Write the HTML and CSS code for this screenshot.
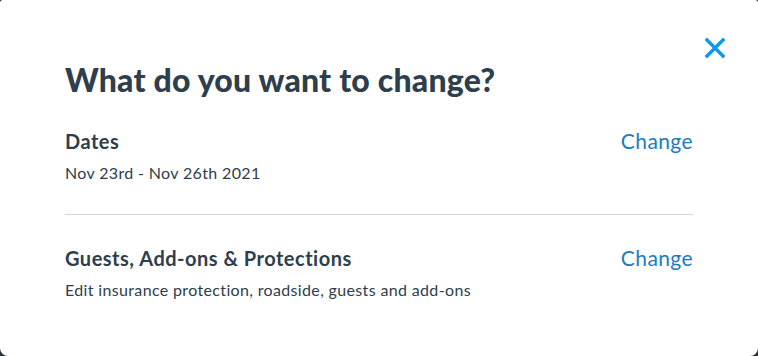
FILE: index.html
```html
<!DOCTYPE html>
<html lang="en">
<head>
  <meta charset="UTF-8" />
  <title>What do you want to change?</title>
  <link rel="stylesheet" href="styles.css">
</head>
<body>

<div id="modal">
  <button class="close" aria-label="Close">
    <svg width="22" height="22" viewBox="0 0 22 22">
      <path d="M3 3 L19 19 M19 3 L3 19" stroke="#0e9aec" stroke-width="3.4" stroke-linecap="square" fill="none"/>
    </svg>
  </button>

  <h2>What do you want to change?</h2>

  <div class="option">
    <div class="option-text">
      <div class="option-title">Dates</div>
      <div class="option-desc">Nov 23rd - Nov 26th 2021</div>
    </div>
    <a class="change" href="#">Change</a>
  </div>

  <div class="option last">
    <div class="option-text">
      <div class="option-title">Guests, Add-ons &amp; Protections</div>
      <div class="option-desc">Edit insurance protection, roadside, guests and add-ons</div>
    </div>
    <a class="change" href="#">Change</a>
  </div>
</div>

</body>
</html>
```

FILE: styles.css
```css
body, html {
  margin: 0;
  height: 100%;
  background: #2b3036;
  font-family: "Lato", "Open Sans", sans-serif;
}

#modal {
  position: relative;
  width: 758px;
  height: 356px;
  box-sizing: border-box;
  background: white;
  border-radius: 3px 3px 8px 8px;
  padding: 60px 65px 0 65px;
  color: #2e3e4c;
}

.close {
  position: absolute;
  top: 37px;
  right: 32px;
  padding: 0;
  border: none;
  background: none;
  cursor: pointer;
}

.close svg {
  display: block;
}

h2 {
  margin: 0 0 28px 0;
  font-size: 32px;
  line-height: 40px;
  font-weight: 900;
  letter-spacing: 0.2px;
}

.option {
  display: flex;
  justify-content: space-between;
  align-items: flex-start;
  padding-bottom: 31px;
  border-bottom: 1px solid #d6d6d6;
  margin-bottom: 30px;
}

.option.last {
  border-bottom: none;
}

.option-title {
  font-size: 20px;
  font-weight: 700;
  line-height: 26px;
  letter-spacing: 0.5px;
}

.option-desc {
  margin-top: 9px;
  font-size: 16px;
  line-height: 20px;
  letter-spacing: 0.35px;
}

.change {
  font-size: 21px;
  line-height: 26px;
  letter-spacing: 0.4px;
  color: #1a7cbe;
  text-decoration: none;
}
```
